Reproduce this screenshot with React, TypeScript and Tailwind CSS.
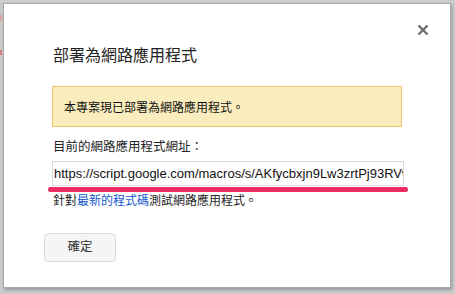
const URL =
  "https://script.google.com/macros/s/AKfycbxjn9Lw3zrtPj93RVwq8Yk2Hn0tXcZp/exec";

export default function App() {
  return (
    <div
      className="relative h-[294px] w-[455px] overflow-hidden bg-[#cbcbcb] pl-[3px] pt-[3px]"
      style={{ fontFamily: '"Liberation Sans", Arial, "Noto Sans CJK TC", sans-serif' }}
    >
      {/* page bits peeking out behind the dialog */}
      <div className="absolute left-0 top-[15px] h-[6px] w-[2px] bg-[#d9a0a0]" />
      <div className="absolute left-0 top-[50px] h-[5px] w-[2px] bg-[#d98080]" />

      <div className="relative h-[285px] w-[448px] border border-[#a9a9a9] bg-white shadow-[1px_2px_3px_rgba(0,0,0,0.25)]">
        <button className="absolute right-[20px] top-[19px] flex h-[14px] w-[14px] items-center justify-center">
          <svg width="12" height="12" viewBox="0 0 12 12">
            <path d="M1.5 1.5 L10.5 10.5 M10.5 1.5 L1.5 10.5" stroke="#6f6f6f" strokeWidth="2.4" />
          </svg>
        </button>

        <div className="flex flex-col items-start pl-[48px] pt-[42px] text-[#222]">
          <h1 className="pl-px text-[16px] leading-[20px]">部署為網路應用程式</h1>

          <div className="mt-[20px] flex h-[41px] w-[350px] items-center border border-[#f0c36d] bg-[#f9edbe] pl-[11px] pt-[2px] text-[12px] text-[#111]">
            本專案現已部署為網路應用程式。
          </div>

          <div className="mt-[12px] pl-px text-[12.5px] leading-[16px]">目前的網路應用程式網址：</div>

          <input
            readOnly
            value={URL}
            className="mt-[6px] h-[25px] w-[352px] border border-[#d9d9d9] bg-white pl-[1px] text-[13px] text-[#111] outline-none"
          />
          <div className="-ml-[4px] mt-[1px] h-[5px] w-[360px] rounded-full bg-[#ee2a64]" />

          <div className="mt-[1px] pl-px text-[12px] leading-[16px]">
            針對<span className="text-[#1155cc]">最新的程式碼</span>測試網路應用程式。
          </div>

          <button className="-ml-[8px] mt-[24px] h-[29px] w-[72px] rounded-sm border border-[#dcdcdc] bg-[#f5f5f5] text-[12.5px] text-[#333]">
            確定
          </button>
        </div>
      </div>
    </div>
  );
}
